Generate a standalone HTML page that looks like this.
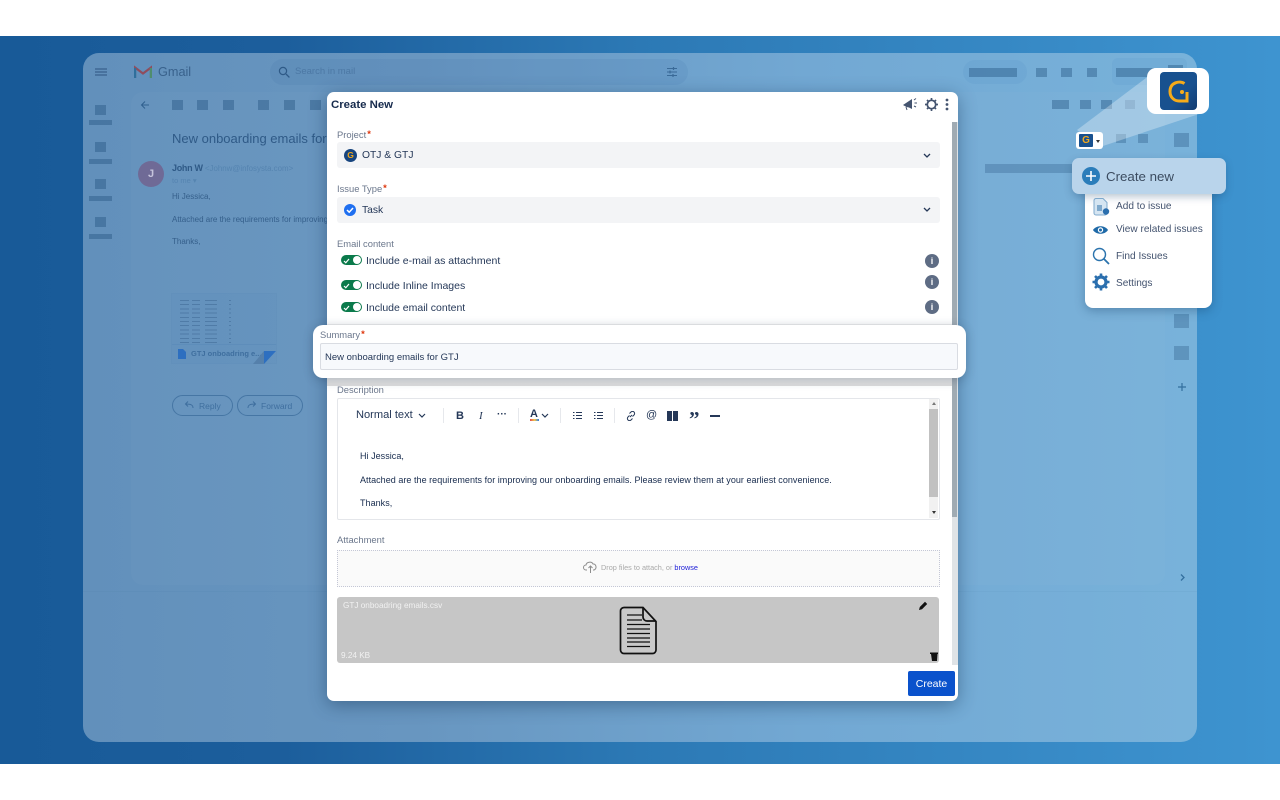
<!DOCTYPE html>
<html><head><meta charset="utf-8"><style>
html,body{margin:0;padding:0;width:1280px;height:800px;overflow:hidden;background:#fff;font-family:"Liberation Sans",sans-serif}
.a{position:absolute}
.t{position:absolute;white-space:nowrap}
.sq{position:absolute;background:rgba(30,75,120,.38)}
.lb{position:absolute;white-space:nowrap;font-size:9.4px;color:#6b778c}
.lb b{color:#de350b;font-weight:bold;margin-left:1px;position:relative;top:-1px}
.sel{position:absolute;left:337px;width:603px;height:26px;background:#f3f4f6;border-radius:3px}
.tg{position:absolute;left:341px;width:21px;height:10px;background:#0b7a4b;border-radius:5px}
.tg:after{content:"";position:absolute;right:1px;top:1px;width:8px;height:8px;border-radius:50%;background:#fff}
.tg svg{position:absolute;left:2px;top:1.500px}
.inc{position:absolute;left:366px;font-size:10.500px;color:#253858;white-space:nowrap}
.inf{position:absolute;left:925px;width:14px;height:14px;border-radius:50%;background:#5e6c84;color:#fff;font:bold 9px/14px "Liberation Sans",sans-serif;text-align:center}
.mi{position:absolute;left:1116px;font-size:10.100px;color:#42526e;white-space:nowrap}
.tb{position:absolute;color:#253858;white-space:nowrap}
.sep{position:absolute;top:408px;width:1px;height:15px;background:#e6e8ec}
.col{position:absolute;top:300px;height:43px;background:repeating-linear-gradient(180deg,rgba(40,80,125,.35) 0 1px,transparent 1px 4.200px)}
</style></head><body>
<div class="a" style="left:0;top:36px;width:1280px;height:728px;background:linear-gradient(90deg,#185a98 0%,#1c5e9c 22%,#2c79b5 50%,#3e94d0 100%)"></div>
<div class="a" style="left:83px;top:53px;width:1114px;height:689px;border-radius:16px;background:linear-gradient(90deg,#6290bb 0%,#6896c0 30%,#72a8d3 65%,#78b2da 100%)"></div>
<div class="a" style="left:131px;top:92px;width:1034px;height:493px;border-radius:12px;background:rgba(255,255,255,.025)"></div>
<div class="a" style="left:83px;top:591px;width:1114px;height:1px;background:rgba(40,90,140,.05)"></div>

<!-- gmail bg -->
<svg class="a" style="left:95px;top:68px" width="12" height="8"><path d="M0 1h12M0 4h12M0 7h12" stroke="#38618c" stroke-width="1.200"/></svg>
<svg class="a" style="left:134px;top:65px" width="18" height="14" viewBox="0 0 18 14"><path d="M1 13V2.500L9 8.500 17 2.500V13" fill="none" stroke="#8f4d5e" stroke-width="2.200"/><path d="M1 13V3" stroke="#2f6f9c" stroke-width="2.400"/><path d="M17 13V3" stroke="#4f8d6e" stroke-width="2.400"/></svg>
<div class="t" style="left:158px;top:65px;font-size:12.700px;color:#39628c">Gmail</div>
<div class="a" style="left:270px;top:59px;width:418px;height:26px;border-radius:13px;background:rgba(60,110,165,.12)"></div>
<svg class="a" style="left:278px;top:66px" width="12" height="12"><circle cx="5" cy="5" r="3.600" fill="none" stroke="#2f5a87" stroke-width="1.200"/><path d="M8 8l3.400 3.400" stroke="#2f5a87" stroke-width="1.300"/></svg>
<div class="t" style="left:295px;top:66px;font-size:9.500px;color:#4c78a4">Search in mail</div>
<svg class="a" style="left:666px;top:66px" width="12" height="12"><path d="M1 2.500h10M1 6h10M1 9.500h10" stroke="#3a6a98" stroke-width="1"/><path d="M7.500 1v3M4 4.500v3M7 8v3" stroke="#3a6a98" stroke-width="1.200"/></svg>
<div class="a" style="left:963px;top:60px;width:64px;height:24px;border-radius:12px;background:rgba(80,140,195,.15)"></div>
<div class="sq" style="left:969px;top:68px;width:48px;height:9px"></div>
<div class="sq" style="left:1036px;top:68px;width:11px;height:9px"></div>
<div class="sq" style="left:1061px;top:68px;width:11px;height:9px"></div>
<div class="sq" style="left:1087px;top:68px;width:10px;height:9px"></div>
<div class="a" style="left:1112px;top:58px;width:75px;height:27px;border-radius:6px;background:rgba(80,140,195,.13)"></div>
<div class="sq" style="left:1116px;top:68px;width:38px;height:9px"></div>
<div class="sq" style="left:1168px;top:65px;width:15px;height:5px"></div>
<!-- left rail -->
<div class="sq" style="left:95px;top:105px;width:11px;height:10px"></div><div class="sq" style="left:89px;top:120px;width:23px;height:5px"></div>
<div class="sq" style="left:95px;top:142px;width:11px;height:10px"></div><div class="sq" style="left:89px;top:159px;width:23px;height:5px"></div>
<div class="sq" style="left:95px;top:179px;width:11px;height:10px"></div><div class="sq" style="left:89px;top:196px;width:23px;height:5px"></div>
<div class="sq" style="left:95px;top:217px;width:11px;height:10px"></div><div class="sq" style="left:89px;top:234px;width:23px;height:5px"></div>
<!-- toolbar -->
<svg class="a" style="left:140px;top:100px" width="10" height="10"><path d="M9 5H2M5 1.500L1.500 5 5 8.500" fill="none" stroke="#30608f" stroke-width="1"/></svg>
<div class="sq" style="left:172px;top:100px;width:11px;height:10px"></div>
<div class="sq" style="left:197px;top:100px;width:11px;height:10px"></div>
<div class="sq" style="left:223px;top:100px;width:11px;height:10px"></div>
<div class="sq" style="left:258px;top:100px;width:11px;height:10px"></div>
<div class="sq" style="left:284px;top:100px;width:11px;height:10px"></div>
<div class="sq" style="left:310px;top:100px;width:11px;height:10px"></div>
<div class="sq" style="left:1052px;top:100px;width:17px;height:9px"></div>
<div class="sq" style="left:1080px;top:100px;width:11px;height:9px"></div>
<div class="sq" style="left:1101px;top:100px;width:11px;height:9px"></div>
<div class="sq" style="left:1125px;top:100px;width:10px;height:9px;opacity:.6"></div>
<div class="sq" style="left:985px;top:164px;width:87px;height:9px;opacity:.7"></div>
<div class="sq" style="left:1116px;top:134px;width:10px;height:9px;opacity:.8"></div>
<div class="sq" style="left:1138px;top:134px;width:10px;height:9px;opacity:.8"></div>
<div class="sq" style="left:1174px;top:133px;width:15px;height:14px;opacity:.8"></div>
<div class="sq" style="left:1174px;top:314px;width:15px;height:14px;opacity:.75"></div>
<div class="sq" style="left:1174px;top:346px;width:15px;height:14px;opacity:.75"></div>
<svg class="a" style="left:1178px;top:383px" width="8" height="8"><path d="M4 0v8M0 4h8" stroke="#336f9e" stroke-width="1.200"/></svg>
<svg class="a" style="left:1180px;top:574px" width="5" height="7"><path d="M1 .5L4 3.500 1 6.500" fill="none" stroke="#336f9e" stroke-width="1.300"/></svg>
<!-- mail -->
<div class="t" style="left:172px;top:131px;font-size:13px;color:#2f5a87">New onboarding emails for</div>
<div class="a" style="left:138px;top:161px;width:26px;height:26px;border-radius:50%;background:#6f6a96;color:#c6c4dc;font:bold 11px/26px 'Liberation Sans',sans-serif;text-align:center">J</div>
<div class="t" style="left:172px;top:163px;font-size:9px;font-weight:bold;color:#2f5a87;letter-spacing:-.3px">John W <span style="font-weight:400;color:#5584b0;letter-spacing:0;font-size:7.900px">&lt;Johnw@infosysta.com&gt;</span></div>
<div class="t" style="left:172px;top:176px;font-size:7.500px;color:#5584b0">to me ▾</div>
<div class="t" style="left:172px;top:192px;font-size:8px;color:#355f8b">Hi Jessica,</div>
<div class="t" style="left:172px;top:215px;font-size:8px;color:#355f8b">Attached are the requirements for improving our</div>
<div class="t" style="left:172px;top:237px;font-size:8px;color:#355f8b">Thanks,</div>
<!-- attachment thumb -->
<div class="a" style="left:172px;top:294px;width:104px;height:69px;background:rgba(90,140,190,.18);outline:1px solid rgba(80,130,180,.2)"></div>
<div class="col" style="left:180px;width:9px"></div>
<div class="col" style="left:192px;width:8px"></div>
<div class="col" style="left:205px;width:12px"></div>
<div class="col" style="left:229px;width:2px"></div>
<div class="a" style="left:172px;top:344px;width:104px;height:1px;background:rgba(80,130,180,.3)"></div>
<svg class="a" style="left:178px;top:349px" width="8" height="10"><path d="M0 0h5l3 3v7H0z" fill="#2d6fc0"/></svg>
<div class="t" style="left:191px;top:349px;font-size:7.500px;font-weight:bold;color:#3f6f9f">GTJ onboadring e...</div>
<svg class="a" style="left:253px;top:351px" width="24" height="13"><path d="M0 13L11 0v13z" fill="#5580ab"/><path d="M11 0h12L11 13z" fill="#2d6fc0"/></svg>
<div class="a" style="left:172px;top:395px;width:59px;height:19px;border:1px solid #4676a4;border-radius:11px"></div>
<div class="a" style="left:237px;top:395px;width:64px;height:19px;border:1px solid #4676a4;border-radius:11px"></div>
<svg class="a" style="left:184px;top:401px" width="10" height="8"><path d="M9 7C9 4 7 3 2 3M4 .5L1.500 3 4 5.500" fill="none" stroke="#3f6f9f"/></svg>
<div class="t" style="left:199px;top:401px;font-size:8.500px;color:#3f6f9f">Reply</div>
<svg class="a" style="left:247px;top:401px" width="10" height="8"><path d="M1 7C1 4 3 3 8 3M6 .5L8.500 3 6 5.500" fill="none" stroke="#3f6f9f"/></svg>
<div class="t" style="left:261px;top:401px;font-size:8.500px;color:#3f6f9f">Forward</div>

<!-- beam + logos -->
<svg class="a" style="left:1070px;top:70px" width="140" height="85"><path d="M7 60L80 5 135 42 30 77z" fill="rgba(255,255,255,.3)"/></svg>
<div class="a" style="left:1147px;top:68px;width:62px;height:46px;background:#fff;border-radius:9px"></div>
<div class="a" style="left:1160px;top:72px;width:37px;height:38px;border-radius:4px;background:linear-gradient(135deg,#18518f 60%,#123b70);"></div>
<svg class="a" style="left:1168px;top:80px" width="22" height="24" viewBox="0 0 22 24"><path d="M16.500 3.500C12 .5 2 2 2 11.500 2 18 7 21 11 21H19V12" fill="none" stroke="#f6ab1a" stroke-width="3"/><circle cx="14" cy="12" r="2" fill="#f6ab1a"/></svg>
<div class="a" style="left:1076px;top:132px;width:27px;height:17px;background:#fff;border-radius:3px"></div>
<div class="a" style="left:1079px;top:134px;width:14px;height:13px;background:#18518f;border-radius:1px;color:#f2a91d;font:bold 10px/13px 'Liberation Sans',sans-serif;text-align:center">G</div>
<div class="a" style="left:1096px;top:140px;width:0;height:0;border:2.500px solid transparent;border-top:3px solid #333"></div>

<!-- menu -->
<div class="a" style="left:1085px;top:180px;width:127px;height:128px;background:#fff;border-radius:8px;box-shadow:0 3px 10px rgba(20,60,100,.35)"></div>
<div class="a" style="left:1072px;top:158px;width:154px;height:36px;background:#b9d4eb;border-radius:7px;box-shadow:0 3px 8px rgba(30,70,110,.3)"></div>
<div class="a" style="left:1082px;top:167px;width:18px;height:18px;border-radius:50%;background:#2b7dba"></div>
<svg class="a" style="left:1082px;top:167px" width="18" height="18"><path d="M9 4v10M4 9h10" stroke="#fff" stroke-width="1.600"/></svg>
<div class="t" style="left:1106px;top:169px;font-size:13.300px;color:#3c4c60">Create new</div>
<svg class="a" style="left:1093px;top:198px" width="17" height="18" viewBox="0 0 17 18"><path d="M1 2.500a2 2 0 012-2h7l4 4V15a2 2 0 01-2 2H3a2 2 0 01-2-2z" fill="#d5e5f2" stroke="#7fa9cc"/><path d="M4 7h5v6H4z" fill="#7fa9cc"/><circle cx="13" cy="13.500" r="3.200" fill="#2b6fae"/></svg>
<svg class="a" style="left:1093px;top:225px" width="15" height="10" viewBox="0 0 15 10"><path d="M0 5C3 0 12 0 15 5 12 10 3 10 0 5z" fill="#1f6aa8"/><circle cx="7.500" cy="5" r="2.700" fill="#fff"/><circle cx="7.500" cy="5" r="1.500" fill="#1f6aa8"/></svg>
<svg class="a" style="left:1092px;top:247px" width="18" height="18"><circle cx="7.500" cy="7.500" r="6" fill="none" stroke="#2b73ad" stroke-width="1.400"/><path d="M12 12l5 5" stroke="#2b73ad" stroke-width="1.800"/></svg>
<svg class="a" style="left:1092px;top:273px" width="18" height="18" viewBox="0 0 18 18"><circle cx="9" cy="9" r="5" fill="none" stroke="#2b6fae" stroke-width="3.200"/><path d="M9 .5v3M9 14.500v3M.5 9h3M14.500 9h3M3 3l2.200 2.200M12.800 12.800L15 15M15 3l-2.200 2.200M5.200 12.800L3 15" stroke="#2b6fae" stroke-width="2.600"/></svg>
<div class="mi" style="top:201px">Add to issue</div>
<div class="mi" style="top:224px">View related issues</div>
<div class="mi" style="top:251px">Find Issues</div>
<div class="mi" style="top:278px">Settings</div>

<!-- modal -->
<div class="a" style="left:327px;top:92px;width:631px;height:609px;background:#fff;border-radius:7px;box-shadow:0 4px 18px rgba(20,50,85,.45)"></div>
<div class="t" style="left:331px;top:99px;font-size:11.400px;font-weight:bold;color:#172b4d">Create New</div>
<svg class="a" style="left:902px;top:97px" width="16" height="15" viewBox="0 0 16 15"><path d="M1 8L10 2v10L7 10.500 4.500 10z" fill="#44546f"/><path d="M4 10l1 3M12 3l2-1.500M12.500 6h2.500M12 9l2 1" stroke="#44546f" stroke-width="1"/></svg>
<svg class="a" style="left:924px;top:97px" width="15" height="15" viewBox="0 0 15 15"><circle cx="7.500" cy="7.500" r="4.200" fill="none" stroke="#44546f" stroke-width="1.700"/><path d="M7.500 1v2M7.500 12v2M1 7.500h2M12 7.500h2M3 3l1.500 1.500M10.500 10.500L12 12M12 3l-1.500 1.500M4.500 10.500L3 12" stroke="#44546f" stroke-width="1.700"/></svg>
<svg class="a" style="left:945px;top:98px" width="4" height="13"><circle cx="2" cy="2" r="1.400" fill="#44546f"/><circle cx="2" cy="6.500" r="1.400" fill="#44546f"/><circle cx="2" cy="11" r="1.400" fill="#44546f"/></svg>
<div class="a" style="left:952px;top:122px;width:6px;height:543px;background:#dfe3e6"></div>
<div class="a" style="left:952px;top:122px;width:5px;height:395px;background:#a0abb3"></div>

<div class="lb" style="left:337px;top:129px">Project<b>*</b></div>
<div class="sel" style="top:142px"></div>
<div class="a" style="left:344px;top:149px;width:13px;height:13px;border-radius:50%;background:#17457f;color:#f2a91d;font:bold 8.500px/13px 'Liberation Sans',sans-serif;text-align:center">G</div>
<div class="t" style="left:362px;top:150px;font-size:10.300px;color:#253858">OTJ &amp; GTJ</div>
<svg class="a" style="left:923px;top:153px" width="8" height="6"><path d="M1 1l3 3 3-3" fill="none" stroke="#253858" stroke-width="1.300"/></svg>
<div class="lb" style="left:337px;top:183px">Issue Type<b>*</b></div>
<div class="sel" style="top:197px"></div>
<div class="a" style="left:344px;top:204px;width:12px;height:12px;border-radius:50%;background:#1f6ff0"></div>
<svg class="a" style="left:344px;top:204px" width="12" height="12"><path d="M3 6l2.200 2.200L9 4" fill="none" stroke="#fff" stroke-width="1.500"/></svg>
<div class="t" style="left:362px;top:205px;font-size:10.300px;color:#253858">Task</div>
<svg class="a" style="left:923px;top:207px" width="8" height="6"><path d="M1 1l3 3 3-3" fill="none" stroke="#253858" stroke-width="1.300"/></svg>
<div class="lb" style="left:337px;top:238px">Email content</div>
<div class="tg" style="top:255px"><svg width="8" height="7"><path d="M1 4l1.800 1.800L6 2" fill="none" stroke="#fff" stroke-width="1.200"/></svg></div>
<div class="inc" style="top:255px">Include e-mail as attachment</div>
<div class="tg" style="top:280px"><svg width="8" height="7"><path d="M1 4l1.800 1.800L6 2" fill="none" stroke="#fff" stroke-width="1.200"/></svg></div>
<div class="inc" style="top:280px">Include Inline Images</div>
<div class="tg" style="top:302px"><svg width="8" height="7"><path d="M1 4l1.800 1.800L6 2" fill="none" stroke="#fff" stroke-width="1.200"/></svg></div>
<div class="inc" style="top:302px">Include email content</div>
<div class="inf" style="top:254px">i</div><div class="inf" style="top:275px">i</div><div class="inf" style="top:300px">i</div>

<!-- summary -->
<div class="a" style="left:327px;top:324px;width:625px;height:62px;background:linear-gradient(#eee,#fff0 30%,#fff0 70%,#ddd)"></div>
<div class="a" style="left:313px;top:325px;width:653px;height:53px;background:#fff;border-radius:10px;box-shadow:0 2px 10px rgba(30,50,75,.3)"></div>
<div class="lb" style="left:320px;top:329px">Summary<b>*</b></div>
<div class="a" style="left:320px;top:343px;width:636px;height:25px;background:#f7f9fc;border:1px solid #d9dce2;border-radius:2px"></div>
<div class="t" style="left:325px;top:352px;font-size:9.500px;color:#253858">New onboarding emails for GTJ</div>

<!-- description -->
<div class="lb" style="left:337px;top:384px">Description</div>
<div class="a" style="left:337px;top:398px;width:601px;height:120px;border:1px solid #e4e6ea;border-radius:2px"></div>
<div class="tb" style="left:356px;top:409px;font-size:11.100px">Normal text</div>
<svg class="a" style="left:418px;top:413px" width="8" height="6"><path d="M1 1l3 3 3-3" fill="none" stroke="#253858" stroke-width="1.200"/></svg>
<div class="sep" style="left:443px"></div>
<div class="tb" style="left:456px;top:410px;font-size:11px;font-weight:bold">B</div>
<div class="tb" style="left:479px;top:410px;font-size:11px;font-style:italic;font-family:'Liberation Serif',serif">I</div>
<div class="tb" style="left:497px;top:409px;font-size:10px;font-weight:bold">···</div>
<div class="sep" style="left:518px"></div>
<div class="tb" style="left:530px;top:408px;font-size:11px;font-weight:bold">A</div>
<div class="a" style="left:530px;top:419px;width:9px;height:2px;background:linear-gradient(90deg,#e5484d,#f2c94c,#2b7de9)"></div>
<svg class="a" style="left:541px;top:413px" width="8" height="6"><path d="M1 1l3 3 3-3" fill="none" stroke="#253858" stroke-width="1.200"/></svg>
<div class="sep" style="left:560px"></div>
<svg class="a" style="left:573px;top:411px" width="9" height="9"><path d="M3 1.500h6M3 4.500h6M3 7.500h6M0 1.500h1.500M0 4.500h1.500M0 7.500h1.500" stroke="#253858"/></svg>
<svg class="a" style="left:594px;top:411px" width="9" height="9"><path d="M3 1.500h6M3 4.500h6M3 7.500h6M0 1.500h1.500M0 4.500h1.500M0 7.500h1.500" stroke="#253858"/></svg>
<div class="sep" style="left:614px"></div>
<svg class="a" style="left:626px;top:411px" width="10" height="10"><path d="M4 6l2-2M3.500 4.500L2 6a2 2 0 003 3l1.500-1.500M6.500 5.500L8 4a2 2 0 00-3-3L3.500 2.500" fill="none" stroke="#253858"/></svg>
<div class="tb" style="left:646px;top:409px;font-size:11px">@</div>
<svg class="a" style="left:667px;top:411px" width="11" height="10"><path d="M0 0h5v10H0zM6 0h5v10H6z" fill="#253858"/></svg>
<div class="tb" style="left:689px;top:408px;font-size:21px;line-height:22px;font-weight:bold;font-family:'Liberation Serif',serif">”</div>
<div class="a" style="left:710px;top:415px;width:10px;height:1.500px;background:#253858"></div>
<div class="t" style="left:360px;top:451px;font-size:9px;letter-spacing:.035px;color:#172b4d">Hi Jessica,</div>
<div class="t" style="left:360px;top:475px;font-size:9px;letter-spacing:.035px;color:#172b4d">Attached are the requirements for improving our onboarding emails. Please review them at your earliest convenience.</div>
<div class="t" style="left:360px;top:498px;font-size:9px;letter-spacing:.035px;color:#172b4d">Thanks,</div>
<div class="a" style="left:929px;top:399px;width:9px;height:119px;background:#f1f1f1"></div>
<div class="a" style="left:929px;top:409px;width:9px;height:88px;background:#c1c1c1"></div>
<div class="a" style="left:932px;top:402px;border:2px solid transparent;border-bottom:3px solid #777;border-top:0"></div>
<div class="a" style="left:932px;top:511px;border:2px solid transparent;border-top:3px solid #333;border-bottom:0"></div>

<!-- attachment -->
<div class="lb" style="left:337px;top:534px">Attachment</div>
<div class="a" style="left:337px;top:550px;width:601px;height:35px;background:#fafafa;border:1px dotted #c4c7d6"></div>
<svg class="a" style="left:583px;top:560px" width="15" height="14" viewBox="0 0 15 14"><path d="M4 10H3a2.500 2.500 0 010-5c.5-3 5.500-4 7-1 3-.5 4.500 4.500 1 6h-1" fill="none" stroke="#8d8d8d"/><path d="M7.500 13V6M5.500 8l2-2 2 2" fill="none" stroke="#8d8d8d"/></svg>
<div class="t" style="left:601px;top:563px;font-size:7.300px;color:#a9a9a9">Drop files to attach, or <span style="color:#2020d8">browse</span></div>
<div class="a" style="left:337px;top:597px;width:602px;height:66px;background:#c6c6c6;border-radius:3px"></div>
<div class="t" style="left:343px;top:601px;font-size:8.200px;color:#f1f1f1">GTJ onboadring emails.csv</div>
<div class="t" style="left:341px;top:651px;font-size:8.200px;color:#f1f1f1">9.24 KB</div>
<svg class="a" style="left:619px;top:606px" width="39" height="49" viewBox="0 0 39 49"><path d="M5 1.500h19l13 14V44a3.500 3.500 0 01-3.500 3.500H5A3.500 3.500 0 011.500 44V5A3.500 3.500 0 015 1.500z" fill="#c9c9c9" stroke="#111" stroke-width="1.700"/><path d="M24 1.500V11a4 4 0 004 4h9" fill="none" stroke="#111" stroke-width="1.700"/><path d="M8 9h15M8 14h15M8 18.500h23M8 23h23M8 27.500h23M8 32h23M8 36h23M8 40.500h23" stroke="#111" stroke-width="1.200"/></svg>
<svg class="a" style="left:919px;top:601px" width="9" height="9"><path d="M0 9l.8-3L6 .8 8.200 3 3 8.200z" fill="#111"/></svg>
<svg class="a" style="left:930px;top:652px" width="9" height="9"><path d="M0 .5h8v1.500H0zM1 2h6.500L7 9H2z" fill="#111"/></svg>
<div class="a" style="left:908px;top:671px;width:47px;height:25px;background:#0a52cc;border-radius:2px;color:#fff;font-size:10.500px;line-height:26px;text-align:center">Create</div>
</body></html>
